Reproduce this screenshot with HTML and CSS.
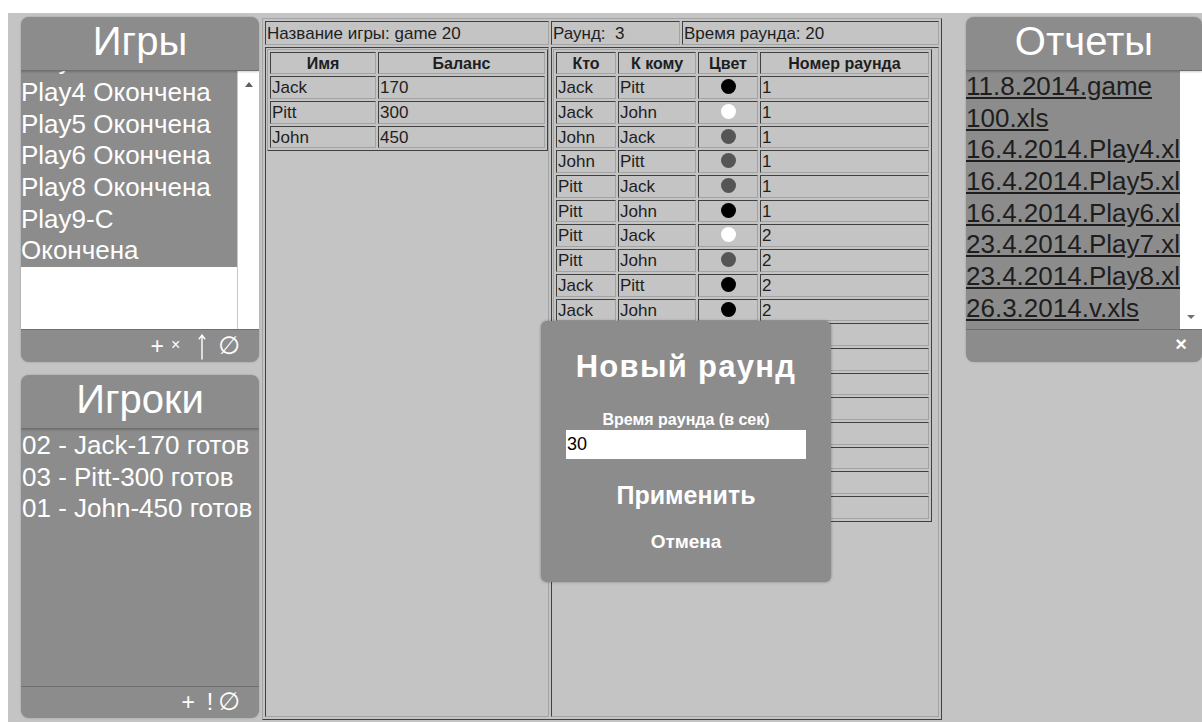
FILE: index.html
```html
<!DOCTYPE html>
<html lang="ru">
<head>
<meta charset="utf-8">
<title>Игра</title>
<link rel="stylesheet" href="styles.css">
</head>
<body>
<div class="app">
  <div class="side">
    <section class="panel panel-games">
      <header class="panel-head">Игры</header>
      <div class="listbox">
        <div class="listbox-items">
          <div class="listbox-scroll">
            <div class="option">Play1 Окончена</div>
            <div class="option">Play2 Окончена</div>
            <div class="option">Play3 Окончена</div>
            <div class="option">Play4 Окончена</div>
            <div class="option">Play5 Окончена</div>
            <div class="option">Play6 Окончена</div>
            <div class="option">Play8 Окончена</div>
            <div class="option">Play9-C Окончена</div>
          </div>
        </div>
        <div class="scrollbar"><span class="arrow arrow-up"></span></div>
      </div>
      <footer class="panel-foot">
        <span class="ico ico-plus">+</span><span class="ico ico-times">×</span><svg class="ico ico-up" width="8" height="26" viewBox="0 0 8 26" aria-label="↑"><path d="M4 25.5V1.5M0.8 5.2L4 1.2L7.2 5.2" fill="none" stroke="#fff" stroke-width="1.4"/></svg><span class="ico ico-empty">∅</span>
      </footer>
    </section>

    <section class="panel panel-players">
      <header class="panel-head">Игроки</header>
      <ul class="players">
        <li>02 - Jack-170 готов</li>
        <li>03 - Pitt-300 готов</li>
        <li>01 - John-450 готов</li>
      </ul>
      <footer class="panel-foot">
        <span class="ico ico-plus ico-plus-wide">+</span><span class="ico ico-bang">!</span><span class="ico ico-empty">∅</span>
      </footer>
    </section>
  </div>

  <table class="board">
    <tr class="board-info">
      <td class="c-game">Название игры: game 20</td>
      <td class="c-round">Раунд:&nbsp; 3</td>
      <td class="c-time">Время раунда: 20</td>
    </tr>
    <tr class="board-main">
      <td>
        <table class="grid grid-players">
          <tr><th class="w-name">Имя</th><th class="w-balance">Баланс</th></tr>
          <tr><td>Jack</td><td>170</td></tr>
          <tr><td>Pitt</td><td>300</td></tr>
          <tr><td>John</td><td>450</td></tr>
        </table>
      </td>
      <td colspan="2">
        <table class="grid grid-moves">
          <tr><th class="w-who">Кто</th><th class="w-to">К кому</th><th class="w-color">Цвет</th><th class="w-round">Номер раунда</th></tr>
          <tr><td>Jack</td><td>Pitt</td><td class="dot-cell"><span class="dot dot-black"></span></td><td>1</td></tr>
          <tr><td>Jack</td><td>John</td><td class="dot-cell"><span class="dot dot-white"></span></td><td>1</td></tr>
          <tr><td>John</td><td>Jack</td><td class="dot-cell"><span class="dot dot-gray"></span></td><td>1</td></tr>
          <tr><td>John</td><td>Pitt</td><td class="dot-cell"><span class="dot dot-gray"></span></td><td>1</td></tr>
          <tr><td>Pitt</td><td>Jack</td><td class="dot-cell"><span class="dot dot-gray"></span></td><td>1</td></tr>
          <tr><td>Pitt</td><td>John</td><td class="dot-cell"><span class="dot dot-black"></span></td><td>1</td></tr>
          <tr><td>Pitt</td><td>Jack</td><td class="dot-cell"><span class="dot dot-white"></span></td><td>2</td></tr>
          <tr><td>Pitt</td><td>John</td><td class="dot-cell"><span class="dot dot-gray"></span></td><td>2</td></tr>
          <tr><td>Jack</td><td>Pitt</td><td class="dot-cell"><span class="dot dot-black"></span></td><td>2</td></tr>
          <tr><td>Jack</td><td>John</td><td class="dot-cell"><span class="dot dot-black"></span></td><td>2</td></tr>
          <tr><td>John</td><td>Jack</td><td class="dot-cell"><span class="dot dot-white"></span></td><td>2</td></tr>
          <tr><td>John</td><td>Pitt</td><td class="dot-cell"><span class="dot dot-gray"></span></td><td>2</td></tr>
          <tr><td>Jack</td><td>Pitt</td><td class="dot-cell"><span class="dot dot-gray"></span></td><td>3</td></tr>
          <tr><td>Jack</td><td>John</td><td class="dot-cell"><span class="dot dot-black"></span></td><td>3</td></tr>
          <tr><td>Pitt</td><td>Jack</td><td class="dot-cell"><span class="dot dot-white"></span></td><td>3</td></tr>
          <tr><td>Pitt</td><td>John</td><td class="dot-cell"><span class="dot dot-gray"></span></td><td>3</td></tr>
          <tr><td>John</td><td>Jack</td><td class="dot-cell"><span class="dot dot-black"></span></td><td>3</td></tr>
          <tr><td>John</td><td>Pitt</td><td class="dot-cell"><span class="dot dot-white"></span></td><td>3</td></tr>
        </table>
      </td>
    </tr>
  </table>

  <section class="panel panel-reports">
    <header class="panel-head">Отчеты</header>
    <div class="listbox">
      <div class="reports-items">
        <div class="report"><a href="#">11.8.2014.game 100.xls</a></div>
        <div class="report"><a href="#">16.4.2014.Play4.xls</a></div>
        <div class="report"><a href="#">16.4.2014.Play5.xls</a></div>
        <div class="report"><a href="#">16.4.2014.Play6.xls</a></div>
        <div class="report"><a href="#">23.4.2014.Play7.xls</a></div>
        <div class="report"><a href="#">23.4.2014.Play8.xls</a></div>
        <div class="report"><a href="#">26.3.2014.v.xls</a></div>
      </div>
      <div class="scrollbar scrollbar-bottom"><span class="arrow arrow-down"></span></div>
    </div>
    <footer class="panel-foot panel-foot-close">×</footer>
  </section>

  <div class="dialog">
    <h2 class="dialog-title">Новый раунд</h2>
    <div class="dialog-label">Время раунда (в сек)</div>
    <input class="dialog-input" type="text" value="30">
    <button class="dialog-btn dialog-apply" type="button">Применить</button>
    <button class="dialog-btn dialog-cancel" type="button">Отмена</button>
  </div>
</div>
</body>
</html>
```

FILE: styles.css
```css
html, body {
  margin: 0;
  background: #fff;
}

body {
  font-family: "Liberation Sans", Arial, sans-serif;
}

.app {
  position: relative;
  margin: 13px 0 0 8px;
  height: 709px;
  box-sizing: border-box;
  padding: 4px 0 0 13px;
  background: #c4c4c4;
  display: flex;
  align-items: flex-start;
}

/* ---------- side panels ---------- */

.side {
  width: 238px;
  flex: none;
  display: flex;
  flex-direction: column;
  gap: 13px;
}

.panel {
  background: #8c8c8c;
  color: #fff;
  border-radius: 8px;
  overflow: hidden;
  display: flex;
  flex-direction: column;
  box-shadow: 0 0 2px rgba(0, 0, 0, 0.25);
}

.panel-games { height: 345px; }
.panel-players { height: 343px; }

.panel-reports {
  width: 236px;
  height: 345px;
  flex: none;
  margin-left: 24px;
}

.panel-head {
  flex: none;
  height: 53px;
  line-height: 49px;
  font-size: 40px;
  text-align: center;
  border-bottom: 1px solid #6f6f6f;
  box-shadow: 0 1px 2px rgba(0, 0, 0, 0.2);
  position: relative;
}

/* footer tool row: + × ↑ ∅ */

.panel-foot {
  flex: none;
  height: 32px;
  box-sizing: border-box;
  border-top: 1px solid #6f6f6f;
  padding-right: 19px;
  text-align: right;
  line-height: 29px;
  white-space: nowrap;
}

.ico {
  display: inline-block;
  vertical-align: baseline;
}

.ico-plus { font-size: 23px; margin-right: 7px; }
.ico-plus-wide { margin-right: 12px; }
.ico-times { font-size: 16px; margin-right: 18px; vertical-align: 4px; }
.ico-up { margin-right: 12px; vertical-align: -6px; }
.ico-bang { font-size: 23px; margin-right: 5px; }
.ico-empty { font-size: 25px; font-family: "DejaVu Sans", sans-serif; }

.panel-foot-close {
  font-size: 20px;
  font-weight: bold;
  padding-right: 15px;
  line-height: 28px;
}

/* list box with its own scrollbar */

.listbox {
  height: 258px;
  flex: none;
  display: flex;
}

.listbox-items {
  flex: 1;
  overflow: hidden;
  background: #fff;
}

.listbox-scroll {
  margin-top: -89px;
}

.option {
  background: #8c8c8c;
  font-size: 26px;
  line-height: 31.67px;
  padding: 0 4px 0 0;
}

.scrollbar {
  width: 22px;
  flex: none;
  background: #fff;
  border-left: 1px solid #c8c8c8;
  display: flex;
  justify-content: center;
  align-items: flex-start;
  padding-top: 11px;
  box-sizing: border-box;
}

.scrollbar-bottom {
  align-items: flex-end;
  padding: 0 0 10px;
  border-left: 0;
}

.arrow {
  width: 0;
  height: 0;
  border-left: 4px solid transparent;
  border-right: 4px solid transparent;
}

.arrow-up { border-bottom: 5px solid #606060; }
.arrow-down { border-top: 4px solid #707070; }

.players {
  list-style: none;
  margin: 0;
  padding: 1px 0 0 1px;
  flex: 1;
  font-size: 26px;
  line-height: 31.67px;
  white-space: nowrap;
}

.reports-items {
  flex: 1;
  overflow: hidden;
  background: #8c8c8c;
}

.report {
  font-size: 26px;
  line-height: 31.67px;
  white-space: nowrap;
}

.report:first-child { white-space: normal; }

.report a {
  color: #1e1e1e;
  text-decoration: underline;
}

/* ---------- game board ---------- */

.board,
.grid {
  border-collapse: separate;
  border-spacing: 2px;
  border: 1px solid;
  border-color: #a3a3a3 #404040 #404040 #a3a3a3;
  table-layout: fixed;
  color: #1e1e1e;
}

.board {
  flex: none;
  width: 680px;
  margin: 1px 0 0 3px;
  font-size: 17px;
}

.board td,
.grid td,
.grid th {
  border: 1px solid;
  border-color: #404040 #a3a3a3 #a3a3a3 #404040;
  padding: 2px 1px 0;
  line-height: 18.7px;
  text-align: left;
}

.board-info td {
  white-space: nowrap;
  overflow: hidden;
  line-height: 19.5px;
}

.board-main > td {
  vertical-align: top;
  box-sizing: border-box;
  height: 670px;
  padding: 1px;
}

.c-game { width: 280px; }
.c-round { width: 125px; }
.c-time { width: 253px; }

.grid { font-size: 17px; }

.grid th {
  font-size: 16px;
  font-weight: bold;
  text-align: center;
}

.grid-players { width: 281px; }
.w-name { width: 102px; }
.w-balance { width: 163px; }

.grid-moves { width: 379px; }
.w-who { width: 56px; }
.w-to { width: 74px; }
.w-color { width: 56px; }
.w-round { width: 165px; }

.grid td.dot-cell { text-align: center; }

.dot {
  display: inline-block;
  width: 15px;
  height: 15px;
  border-radius: 50%;
  vertical-align: -1px;
}

.dot-black { background: #000; }
.dot-white { background: #fff; }
.dot-gray { background: #555; }

/* ---------- new round dialog ---------- */

.dialog {
  position: absolute;
  left: 533px;
  top: 308px;
  width: 290px;
  height: 261px;
  box-sizing: border-box;
  padding-top: 28px;
  background: #8c8c8c;
  border-radius: 6px;
  box-shadow: 0 0 3px rgba(0, 0, 0, 0.35);
  color: #fff;
  text-align: center;
  font-weight: bold;
}

.dialog-title {
  margin: 0;
  font-size: 31px;
  line-height: 36px;
  letter-spacing: 1.3px;
}

.dialog-label {
  margin-top: 26px;
  font-size: 16px;
  line-height: 18px;
}

.dialog-input {
  display: block;
  width: 240px;
  height: 29px;
  box-sizing: border-box;
  margin: 1px auto 0;
  padding: 0 1px;
  border: 0;
  outline: 0;
  background: #fff;
  color: #000;
  font: 18px "Liberation Sans", Arial, sans-serif;
}

.dialog-btn {
  display: block;
  width: 100%;
  padding: 0;
  border: 0;
  background: none;
  color: #fff;
  font-family: inherit;
  font-weight: bold;
}

.dialog-apply {
  margin-top: 21px;
  font-size: 25px;
  line-height: 30px;
}

.dialog-cancel {
  margin-top: 21px;
  font-size: 19px;
  line-height: 22px;
}
```
